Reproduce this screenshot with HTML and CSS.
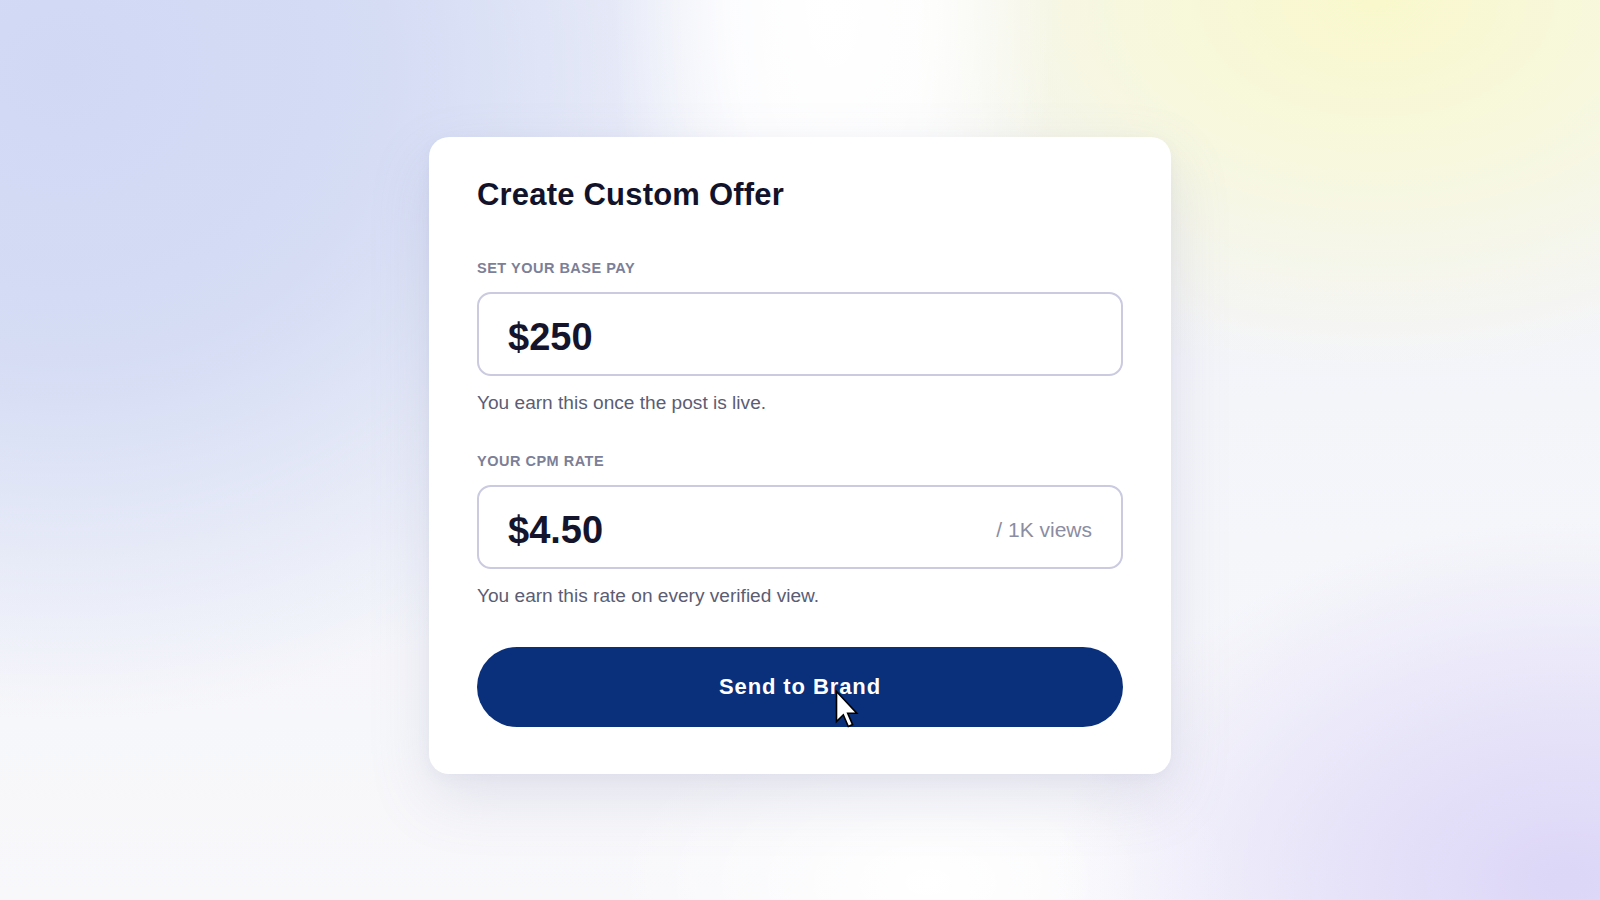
FILE: index.html
```html
<!DOCTYPE html>
<html lang="en">
<head>
<meta charset="utf-8">
<title>Create Custom Offer</title>
<link rel="stylesheet" href="styles.css">
</head>
<body>
<main class="stage">
  <section class="card">
    <h1 class="title">Create Custom Offer</h1>

    <div class="label label-first">SET YOUR BASE PAY</div>
    <div class="field">
      <span class="value">$250</span>
    </div>
    <p class="helper">You earn this once the post is live.</p>

    <div class="label label-second">YOUR CPM RATE</div>
    <div class="field">
      <span class="value">$4.50</span>
      <span class="unit">/ 1K views</span>
    </div>
    <p class="helper">You earn this rate on every verified view.</p>

    <button class="send" type="button">Send to Brand</button>
  </section>
</main>
<svg class="cursor" width="26" height="40" viewBox="0 0 26 40" aria-hidden="true">
  <path d="M1.5 1.5 V31.5 L8.3 24.8 L13.3 36.5 L17.6 34.6 L12.7 23.2 H21.8 Z" fill="#ffffff" stroke="#000000" stroke-width="1.6" stroke-linejoin="miter"/>
</svg>
</body>
</html>
```

FILE: styles.css
```css
* { box-sizing: border-box; }

html, body {
  margin: 0;
  padding: 0;
}

body {
  position: relative;
  width: 1600px;
  height: 900px;
  overflow: hidden;
  font-family: "Liberation Sans", Arial, sans-serif;
  background:
    radial-gradient(ellipse 14% 55% at 52% 0%, #ffffff 0%, rgba(255, 255, 255, 0.85) 45%, rgba(255, 255, 255, 0) 100%),
    radial-gradient(ellipse 36% 42% at 86% 0%, rgba(249, 248, 204, 1) 0%, rgba(249, 249, 214, 0.75) 45%, rgba(249, 249, 224, 0) 100%),
    radial-gradient(ellipse 46% 72% at 4% 8%, #d0d8f4 0%, rgba(210, 218, 244, 0.9) 45%, rgba(222, 228, 247, 0) 100%),
    radial-gradient(ellipse 32% 40% at 98% 98%, #dcd6f7 0%, rgba(223, 218, 248, 0.7) 45%, rgba(226, 222, 248, 0) 100%),
    radial-gradient(ellipse 20% 20% at 58% 98%, #ffffff 0%, rgba(255, 255, 255, 0) 100%),
    linear-gradient(180deg, #f1f2f9 0%, #f5f6fa 60%, #f8f8fb 100%);
}

.stage {
  height: 900px;
  padding-top: 10px;
  display: flex;
  align-items: center;
  justify-content: center;
}

.card {
  width: 742px;
  background: #ffffff;
  border-radius: 20px;
  padding: 40px 48px 47px;
  display: flex;
  flex-direction: column;
  box-shadow: 0 24px 60px rgba(120, 125, 170, 0.17), 0 4px 14px rgba(120, 125, 170, 0.06);
}

.title {
  margin: 0;
  font-size: 31px;
  line-height: 36px;
  font-weight: 700;
  letter-spacing: 0.2px;
  color: #12132b;
}

.label {
  font-size: 14.5px;
  line-height: 18px;
  font-weight: 700;
  letter-spacing: 0.5px;
  color: #7c7f97;
}

.label-first { margin-top: 46px; }
.label-second { margin-top: 38px; }

.field {
  margin-top: 15px;
  height: 84px;
  border: 2px solid #cacae0;
  border-radius: 14px;
  padding: 7px 29px 0 29px;
  display: flex;
  align-items: center;
  justify-content: space-between;
}

.value {
  font-size: 38px;
  line-height: 44px;
  font-weight: 700;
  color: #14152d;
}

.unit {
  font-size: 21px;
  line-height: 24px;
  color: #8b8da2;
}

.helper {
  margin: 16px 0 0;
  font-size: 19.1px;
  line-height: 22px;
  color: #5b5d73;
}

.send {
  margin-top: 40px;
  height: 80px;
  width: 100%;
  border: none;
  border-radius: 40px;
  background: #0a2f7b;
  color: #ffffff;
  font-family: "Liberation Sans", Arial, sans-serif;
  font-size: 22px;
  font-weight: 700;
  letter-spacing: 0.9px;
  padding: 0;
  cursor: pointer;
}

.cursor {
  position: absolute;
  left: 835px;
  top: 690px;
}
```
